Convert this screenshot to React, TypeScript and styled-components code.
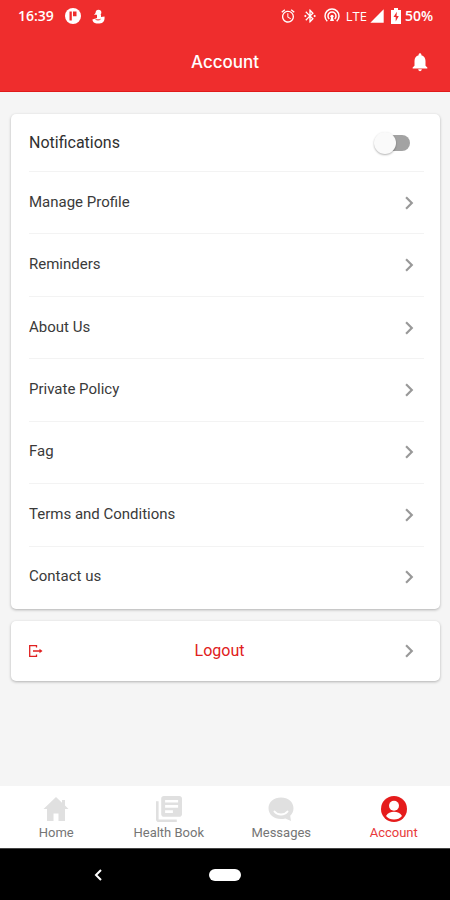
import React from "react";
import styled, { createGlobalStyle } from "styled-components";
import {
  MdAlarm,
  MdBluetoothConnected,
  MdChevronRight,
  MdNotifications,
  MdSignalCellular4Bar,
} from "react-icons/md";

const RED = "#ef2d2d";

const GlobalStyle = createGlobalStyle`
  * { box-sizing: border-box; }
  body {
    margin: 0;
    background: #f5f5f5;
    font-family: Roboto, "Liberation Sans", sans-serif;
  }
  button { font: inherit; color: inherit; background: none; border: 0; padding: 0; cursor: pointer; }
  svg { display: block; flex: none; }
`;

const Page = styled.div`
  display: flex;
  flex-direction: column;
  min-height: 100vh;
`;

const Header = styled.header`
  background: ${RED};
  color: #fff;
  border-bottom: 1px solid #e01a1a;
`;

const StatusBar = styled.div`
  display: flex;
  justify-content: space-between;
  align-items: center;
  height: 32px;
  padding: 0 17px 0 18px;
`;

const StatusGroup = styled.div<{ $gap: number }>`
  display: flex;
  align-items: center;
  gap: ${(p) => p.$gap}px;
`;

const StatusText = styled.span<{ $light?: boolean }>`
  font-family: "Open Sans", sans-serif;
  font-weight: ${(p) => (p.$light ? 400 : 600)};
  font-size: ${(p) => (p.$light ? 13 : 14)}px;
  line-height: 20px;
`;

const TitleBar = styled.div`
  display: grid;
  grid-template-columns: 1fr auto 1fr;
  align-items: center;
  height: 59px;
  padding: 0 19px;
`;

const Title = styled.h1`
  grid-column: 2;
  margin: 0;
  font: 500 17px/24px Inter, "Liberation Sans", sans-serif;
`;

const BellButton = styled.button`
  justify-self: end;
`;

const Content = styled.main`
  flex: 1;
  display: flex;
  flex-direction: column;
  gap: 12px;
  padding: 22px 10px 24px 11px;
`;

const Card = styled.section`
  background: #fff;
  border-radius: 5px;
  box-shadow: 0 1px 3px rgba(0, 0, 0, 0.28);
  padding: 0 16px 0 18px;
`;

const ToggleRow = styled.label`
  display: flex;
  align-items: center;
  justify-content: space-between;
  height: 58px;
  padding-right: 14px;
  border-bottom: 1px solid #f3f3f3;
  font-size: 16px;
  line-height: 20px;
  color: #303030;
`;

const Switch = styled.input`
  appearance: none;
  display: grid;
  grid-template-columns: 10px 12px 14px;
  align-items: center;
  width: 36px;
  height: 22px;
  margin: 0;
  cursor: pointer;

  &::before,
  &::after {
    content: "";
    grid-row: 1;
  }
  &::before {
    grid-column: 2 / 4;
    height: 16px;
    border-radius: 8px;
    background: #a3a3a3;
  }
  &::after {
    grid-column: 1 / 3;
    width: 22px;
    height: 22px;
    border-radius: 50%;
    background: #fafafa;
    box-shadow: 0 1px 2px rgba(0, 0, 0, 0.3);
  }
  &:checked::before { background: #f29a9a; grid-column: 1 / 3; }
  &:checked::after { background: ${RED}; grid-column: 2 / 4; }
`;

const Menu = styled.ul`
  display: grid;
  grid-auto-rows: 1fr;
  min-height: 437px;
  margin: 0;
  padding: 0;
  list-style: none;
`;

const MenuItem = styled.li`
  display: flex;
  border-bottom: 1px solid #f3f3f3;
  &:last-child { border-bottom-color: transparent; }
`;

const RowButton = styled.button`
  flex: 1;
  display: flex;
  align-items: center;
  justify-content: space-between;
  text-align: left;
`;

const RowLabel = styled.span`
  font-size: 15px;
  line-height: 20px;
  padding-bottom: 2px;
  color: #3a3a3a;
`;

const ChevronBox = styled.span`
  display: flex;
  justify-content: flex-start;
  width: 28px;
  color: #999;
`;

const LogoutButton = styled.button`
  display: flex;
  align-items: center;
  justify-content: space-between;
  width: 100%;
  height: 60px;
`;

const LogoutLabel = styled.span`
  font-size: 16px;
  line-height: 20px;
  color: #e02020;
`;

const TabBar = styled.nav`
  display: grid;
  grid-template-columns: repeat(4, 1fr);
  height: 62px;
  background: #fff;
`;

const Tab = styled.button<{ $active?: boolean }>`
  display: flex;
  flex-direction: column;
  align-items: center;
  justify-content: center;
  gap: 3px;
  padding-top: 2px;
  color: ${(p) => (p.$active ? "#e51c1c" : "#e0e0e0")};
`;

const TabLabel = styled.span<{ $active?: boolean }>`
  font-size: 13px;
  line-height: 16px;
  color: ${(p) => (p.$active ? "#e83a3a" : "#757575")};
`;

const SystemBar = styled.div`
  display: grid;
  grid-template-columns: 1fr auto 1fr;
  align-items: center;
  height: 52px;
  background: #000;
  border-top: 1px solid #444;
`;

const BackButton = styled.button`
  justify-self: center;
  margin-right: 14px;
`;

const HomePill = styled.button`
  width: 32px;
  height: 12px;
  border-radius: 6px;
  background: #fff;
`;

const Chevron = () => (
  <ChevronBox>
    <MdChevronRight size={26} />
  </ChevronBox>
);

const PodIcon = () => (
  <svg width="16" height="16" viewBox="0 0 16 16">
    <circle cx="8" cy="8" r="8" fill="#fff" />
    <path d="M4.500 3.500h2.300v9H4.500zM8 3.500h3.500v4.700H8z" fill={RED} />
  </svg>
);

const DuckIcon = () => (
  <svg width="13" height="15" viewBox="0 0 13 15" fill="#fff">
    <circle cx="6.500" cy="3.600" r="2.800" />
    <path d="M4.500 2.800 7 5 2 6zM5 5.500h4V8l3.500-.6c.5 4-1.200 7-5 7H4.500C2 14.400.6 12.800.4 10.500L5 9z" />
    <path d="M3.500 10.200c1.500 1 3.500 1 5 0" fill="none" stroke={RED} />
  </svg>
);

const HotspotIcon = () => (
  <svg width="16" height="16" viewBox="0 0 16 16" fill="none" stroke="#fff" strokeWidth="1.500">
    <path d="M3.300 13.200a7 7 0 1 1 9.400 0M5.300 11a4 4 0 1 1 5.400 0" />
    <path d="M8 7.300 10 13H6z" fill="#fff" stroke="none" />
    <circle cx="8" cy="8.300" r="1.600" fill="#fff" stroke="none" />
  </svg>
);

const BatteryIcon = () => (
  <svg width="10" height="16" viewBox="0 0 10 16">
    <path d="M3 0h4v2h3v14H0V2h3z" fill="#fff" />
    <path d="M5.800 3.800 2.500 9h2.200v4.400L7.800 8H5.600z" fill={RED} />
  </svg>
);

const LogoutIcon = () => (
  <svg width="14" height="14" viewBox="0 0 14 14" fill="none" stroke="#e02020" strokeWidth="1.300">
    <path d="M7.500 3.600V1.600H.7v10.800h6.800v-2M4 7h8" />
    <path d="M10.500 4.800 13.500 7l-3 2.200z" fill="#e02020" stroke="none" />
  </svg>
);

const HomeIcon = () => (
  <svg width="26" height="26" viewBox="0 0 26 26" fill="currentColor">
    <path d="M13 1 .5 13H4v12h6.500v-7.500h5V25H22V13h3.500L22 9.600V4h-3v2.800z" />
  </svg>
);

const BookIcon = () => (
  <svg width="26" height="26" viewBox="2 2 20 20" fill="currentColor">
    <path d="M4 6H2v14c0 1.100.900 2 2 2h14v-2H4V6zm16-4H8c-1.100 0-2 .9-2 2v12c0 1.100.900 2 2 2h12c1.100 0 2-.9 2-2V4c0-1.100-.9-2-2-2zm-1 9H9V9h10v2zm-4 4H9v-2h6v2zm4-8H9V5h10v2z" />
  </svg>
);

const MessageIcon = () => (
  <svg width="26" height="26" viewBox="0 0 26 26">
    <path
      d="M13 1.500C5.800 1.500.5 6 .5 12.300S5.800 23 13 23c1.500 0 3-.2 4.300-.6L23 25l-.8-5.200c2-1.900 3.300-4.400 3.300-7.500C25.500 6 20.200 1.500 13 1.500z"
      fill="currentColor"
    />
    <path d="M6.500 15.500c3 4 10 4 13 0" fill="none" stroke="#fff" strokeWidth="2" strokeLinecap="round" />
  </svg>
);

const AccountIcon = () => (
  <svg width="26" height="26" viewBox="0 0 26 26">
    <circle cx="13" cy="13" r="13" fill="currentColor" />
    <circle cx="13" cy="9.800" r="5" fill="#fff" />
    <path d="M5 20c1.600-3 4.800-4.300 8-4.300s6.400 1.300 8 4.300c-2 2.400-4.800 3.600-8 3.600S7 22.400 5 20z" fill="#fff" />
  </svg>
);

const BackIcon = () => (
  <svg width="8" height="12" viewBox="0 0 8 12" fill="none" stroke="#fff" strokeWidth="2">
    <path d="M7 1 2 6l5 5" />
  </svg>
);

const menuItems = [
  "Manage Profile",
  "Reminders",
  "About Us",
  "Private Policy",
  "Fag",
  "Terms and Conditions",
  "Contact us",
];

const tabs = [
  { label: "Home", icon: <HomeIcon /> },
  { label: "Health Book", icon: <BookIcon /> },
  { label: "Messages", icon: <MessageIcon /> },
  { label: "Account", icon: <AccountIcon />, active: true },
];

export default function App() {
  return (
    <Page>
      <GlobalStyle />
      <Header>
        <StatusBar>
          <StatusGroup $gap={11}>
            <StatusText>16:39</StatusText>
            <PodIcon />
            <DuckIcon />
          </StatusGroup>
          <StatusGroup $gap={6}>
            <MdAlarm size={16} />
            <MdBluetoothConnected size={16} />
            <HotspotIcon />
            <StatusGroup $gap={2}>
              <StatusText $light>LTE</StatusText>
              <MdSignalCellular4Bar size={16} />
            </StatusGroup>
            <StatusGroup $gap={4}>
              <BatteryIcon />
              <StatusText>50%</StatusText>
            </StatusGroup>
          </StatusGroup>
        </StatusBar>
        <TitleBar>
          <Title>Account</Title>
          <BellButton aria-label="Notifications">
            <MdNotifications size={22} />
          </BellButton>
        </TitleBar>
      </Header>
      <Content>
        <Card>
          <ToggleRow>
            Notifications
            <Switch type="checkbox" role="switch" />
          </ToggleRow>
          <Menu>
            {menuItems.map((item) => (
              <MenuItem key={item}>
                <RowButton>
                  <RowLabel>{item}</RowLabel>
                  <Chevron />
                </RowButton>
              </MenuItem>
            ))}
          </Menu>
        </Card>
        <Card>
          <LogoutButton>
            <LogoutIcon />
            <LogoutLabel>Logout</LogoutLabel>
            <Chevron />
          </LogoutButton>
        </Card>
      </Content>
      <TabBar>
        {tabs.map((tab) => (
          <Tab key={tab.label} $active={tab.active} aria-current={tab.active ? "page" : undefined}>
            {tab.icon}
            <TabLabel $active={tab.active}>{tab.label}</TabLabel>
          </Tab>
        ))}
      </TabBar>
      <SystemBar>
        <BackButton aria-label="Back">
          <BackIcon />
        </BackButton>
        <HomePill aria-label="Home screen" />
      </SystemBar>
    </Page>
  );
}
